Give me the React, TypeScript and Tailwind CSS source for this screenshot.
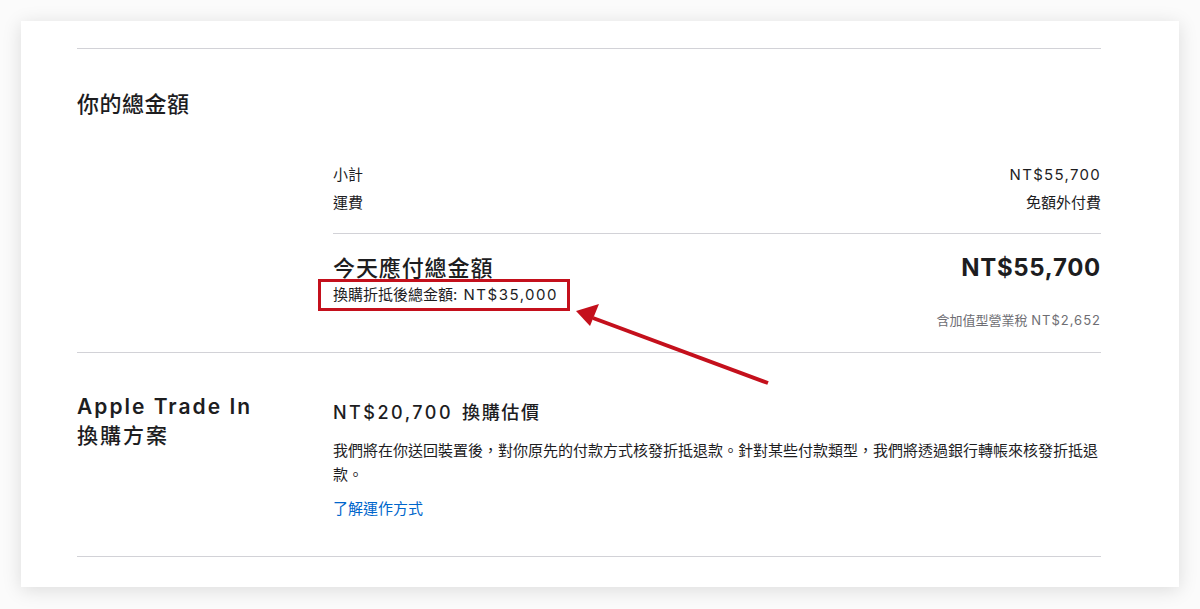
export default function App() {
  return (
    <main
      className="relative min-h-[609px] bg-[#fbfbfb] pt-[21px] px-[21px] text-[#1d1d1f]"
      style={{ fontFamily: 'Inter, "Noto Sans CJK TC", sans-serif' }}
    >
      <div className="w-[1158px] h-[566px] bg-white shadow-[0_3px_18px_rgba(0,0,0,0.13)] pl-[56px] pr-[78px] pt-[27px]">
        {/* 總金額 */}
        <section className="border-t border-[#d2d2d7]">
          <h2 className="mt-[41px] text-[22px] leading-[28px] font-medium tracking-[0.5px]">你的總金額</h2>

          <div className="ml-[256px] mt-[46px]">
            <div className="border-b border-[#d2d2d7] pb-[19px] text-[15px] leading-[22px]">
              <div className="flex justify-between">
                <span>小計</span>
                <span className="tracking-[1.3px]">NT$55,700</span>
              </div>
              <div className="flex justify-between mt-[6px]">
                <span>運費</span>
                <span>免額外付費</span>
              </div>
            </div>

            <div className="flex justify-between pt-[20px] pb-[23px]">
              <div>
                <div className="text-[22px] leading-[28px] font-medium tracking-[0.9px]">今天應付總金額</div>
                <div className="inline-block mt-[-4px] -ml-[15px] border-[3px] border-[#c4101c] pl-[12px] pr-[9px] py-[2px] text-[15px] leading-[22px]">
                  換購折抵後總金額<span className="tracking-[1px]">: </span>
                  <span className="tracking-[1.5px]">NT$35,000</span>
                </div>
              </div>
              <div className="text-right">
                <div className="text-[24px] leading-[28px] font-bold tracking-[0.7px]">NT$55,700</div>
                <div className="mt-[29px] text-[13px] leading-[18px] text-[#6e6e73]">
                  含加值型營業稅 <span className="tracking-[1px]">NT$2,652</span>
                </div>
              </div>
            </div>
          </div>
        </section>

        {/* Trade In */}
        <section className="border-t border-b border-[#d2d2d7] flex pb-[35px]">
          <h2 className="w-[256px] shrink-0 pt-[39px] text-[21px] leading-[29px]">
            <span className="font-semibold tracking-[2px]">Apple Trade In</span>
            <br />
            <span className="font-medium tracking-[2px]">換購方案</span>
          </h2>
          <div className="flex-1 pt-[47px]">
            <div className="text-[18px] leading-[26px] font-medium">
              <span className="tracking-[2.5px]">NT$20,700</span>
              <span className="ml-[9px] tracking-[1.6px]">換購估價</span>
            </div>
            <p className="mt-[13px] text-[15px] leading-[24px]">
              我們將在你送回裝置後，對你原先的付款方式核發折抵退款。針對某些付款類型，我們將透過銀行轉帳來核發折抵退款。
            </p>
            <a href="#" className="block mt-[10px] text-[15px] leading-[24px] text-[#0066cc]">
              了解運作方式
            </a>
          </div>
        </section>
      </div>

      {/* annotation arrow */}
      <svg className="absolute left-0 top-0 pointer-events-none" width="1200" height="609">
        <line x1="768" y1="383" x2="593" y2="318" stroke="#c4101c" strokeWidth="4" />
        <polygon points="576,311 599,304 590,326" fill="#c4101c" />
      </svg>
    </main>
  );
}
